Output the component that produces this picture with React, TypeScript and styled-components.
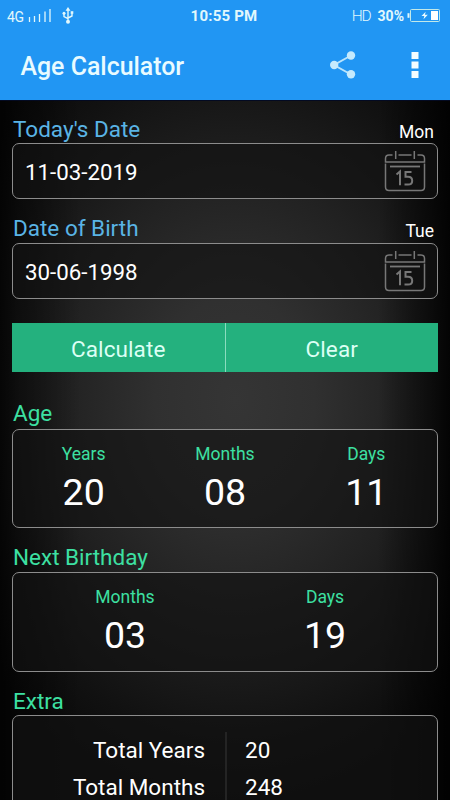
import React from "react";
import styled, { createGlobalStyle } from "styled-components";

const GlobalStyle = createGlobalStyle`
  * { box-sizing: border-box; }
  body { margin: 0; background: #000; overflow: hidden; }
`;

const Screen = styled.div`
  width: 450px;
  height: 800px;
  overflow: hidden;
  display: flex;
  flex-direction: column;
  font-family: Roboto, sans-serif;
  color: #fff;
`;

const TopBar = styled.header`
  height: 100px;
  flex: none;
  background: #2196f3;
`;

const StatusBar = styled.div`
  height: 32px;
  display: grid;
  grid-template-columns: 1fr auto 1fr;
  align-items: center;
  padding: 0 10px 0 7px;
  color: #e2f8fc;
`;

const StatusGroup = styled.div<{ $end?: boolean }>`
  display: flex;
  align-items: center;
  justify-content: ${(p) => (p.$end ? "flex-end" : "flex-start")};
`;

const Network = styled.span`
  font-size: 14px;
  line-height: 16px;
  letter-spacing: -0.4px;
  margin: 2px 4px 0 0;
`;

const Clock = styled.span`
  font-size: 15px;
  line-height: 18px;
  font-weight: 700;
  letter-spacing: 0.2px;
  margin-left: 1px;
`;

const Hd = styled.span`
  font-size: 15.5px;
  line-height: 18px;
  font-weight: 300;
  margin: -1px 7px 0 0;
  letter-spacing: -1.2px;
`;

const Percent = styled.span`
  font-size: 14px;
  line-height: 18px;
  font-weight: 700;
  margin-right: 3px;
`;

const AppBar = styled.div`
  height: 67px;
  display: flex;
  align-items: center;
  padding: 0 31px 0 20.5px;
`;

const Title = styled.h1`
  margin: 2px 0 0;
  flex: 1;
  font-size: 24.9px;
  line-height: 30px;
  font-weight: 500;
  color: #e9fbff;
`;

const IconButton = styled.button<{ $gap?: number }>`
  display: flex;
  border: 0;
  padding: 0;
  background: none;
  margin-right: ${(p) => p.$gap ?? 0}px;
`;

const Content = styled.main`
  height: 700px;
  padding: 0 12px;
  box-shadow: inset 0 1px #030a22;
  background:
    linear-gradient(90deg, rgba(0, 0, 0, 0.75), rgba(0, 0, 0, 0.45) 4%, transparent 18%, transparent 84%, rgba(0, 0, 0, 0.6) 96%, rgba(0, 0, 0, 0.85)),
    radial-gradient(ellipse 320px 410px at 235px 300px, #353535 0%, #303030 25%, #212121 55%, #111 84%, #0a0a0a 100%);
`;

const Heading = styled.div<{ $height: number; $lift: number; $tone: "blue" | "green" }>`
  height: ${(p) => p.$height}px;
  display: flex;
  align-items: flex-end;
  justify-content: space-between;
  padding: 0 4px ${(p) => p.$lift}px 1px;
  font-size: 22.5px;
  line-height: 26px;
  color: ${(p) => (p.$tone === "blue" ? "#5ab4e5" : "#3de0a2")};
`;

const Weekday = styled.span`
  font-size: 17.5px;
  line-height: 20px;
  color: #fff;
`;

const Panel = styled.div<{ $height: number }>`
  height: ${(p) => p.$height}px;
  display: flex;
  border: 1px solid #8c8c8c;
  border-radius: 7px;
  background: rgba(18, 18, 18, 0.65);
`;

const DateField = styled(Panel)`
  align-items: center;
  justify-content: space-between;
  padding: 0 11px 0 12px;
  font-size: 22.3px;
  line-height: 28px;
`;

const DateValue = styled.span`
  padding-top: 2px;
`;

const Actions = styled.div`
  height: 49px;
  margin-top: 24px;
  display: flex;
`;

const Action = styled.button`
  flex: 1;
  border: 0;
  padding: 2px 0 0;
  background: #24b17e;
  color: #dcfff4;
  font: 400 22.5px/28px Roboto, sans-serif;
  letter-spacing: 0.1px;
  & + & { border-left: 1px solid #8bdcbe; }
`;

const Stats = styled(Panel)<{ $inset: number }>`
  padding: 12px ${(p) => p.$inset}px 0;
`;

const Stat = styled.div`
  flex: 1;
  text-align: center;
`;

const StatLabel = styled.div`
  font-size: 17.5px;
  line-height: 24px;
  color: #3de0a2;
`;

const StatValue = styled.div`
  font-size: 37.5px;
  line-height: 44px;
  margin-top: 4px;
`;

const Totals = styled(Panel)`
  padding-top: 16px;
`;

const TotalsColumn = styled.div<{ $labels?: boolean }>`
  flex: 1;
  font-size: 22.5px;
  line-height: 37px;
  text-align: ${(p) => (p.$labels ? "right" : "left")};
  padding: ${(p) => (p.$labels ? "0 20px 0 0" : "0 0 0 18px")};
  border-left: ${(p) => (p.$labels ? "0" : "2px solid #242424")};
`;

const SignalIcon = () => (
  <svg width="24" height="14" viewBox="0 0 24 14" stroke="#e2f8fc" strokeWidth="1.3">
    <path d="M1.5 8v5M6.5 7v6M11.5 5v8M17 2.5V13M22 0v13" />
  </svg>
);

const UsbIcon = () => (
  <svg width="12" height="17" viewBox="0 0 12 17" fill="none" stroke="#e2f8fc" strokeWidth="1.4">
    <path d="M6 3v12M2 6v3.5l4 2.2M10 5v4L6 11" />
    <path d="M6 0 3.5 3.7h5z" fill="#e2f8fc" stroke="none" />
    <circle cx="6" cy="14.7" r="2" fill="#e2f8fc" stroke="none" />
    <circle cx="2" cy="6.3" r="1.5" fill="#e2f8fc" stroke="none" />
    <path d="M8.7 4.2h2.6v2.6H8.7z" fill="#e2f8fc" stroke="none" />
  </svg>
);

const UsbSlot = styled.span`
  display: flex;
  margin: -2px 0 0 10px;
`;

const BatteryIcon = () => (
  <svg width="33" height="13" viewBox="0 0 33 13">
    <path d="M1.5 4.2v4.6" stroke="#e2f8fc" strokeWidth="2" />
    <rect x="3.5" y=".5" width="29" height="12" rx="1" fill="none" stroke="#c2e9e9" />
    <rect x="24" y="2" width="7" height="9" fill="#fff" />
    <path d="M18.7 2.7 14.5 7h2.8l-.8 3.3 4.3-4.5h-2.9z" fill="#e9fbff" />
  </svg>
);

const BatterySlot = styled.span`
  display: flex;
  margin-top: -2px;
`;

const ShareIcon = () => (
  <svg width="26" height="28" viewBox="0 0 26 28">
    <path d="M21 4.5 4 14l17 9.5" fill="none" stroke="#b9e4fc" strokeWidth="2" />
    <g fill="#c5eafd">
      <circle cx="21" cy="4.5" r="4.2" />
      <circle cx="4.2" cy="14" r="4.2" />
      <circle cx="21" cy="23.2" r="4.2" />
    </g>
  </svg>
);

const ShareSlot = styled.span`
  display: flex;
  margin-top: -2px;
`;

const MoreIcon = () => (
  <svg width="8" height="27" viewBox="0 0 8 27" fill="#f5fdff">
    <path d="M.5 0h7v7h-7zM.5 9.5h7v7h-7zM.5 19h7v7h-7z" />
  </svg>
);

const CalendarIcon = () => (
  <svg width="42" height="42" viewBox="0 0 42 42" fill="none" stroke="#777" strokeWidth="1.5">
    <path d="M8.5 5H5Q1.5 5 1.5 8.500V12h39V8.500Q40.500 5 37 5h-3.500M14.500 5h13" />
    <path d="M11.700 1v8M30.300 1v8" />
    <path d="M1.500 13.500V37q0 3.500 3.500 3.500h32q3.500 0 3.500-3.500V13.500" />
    <path d="M6 16.500h30" strokeWidth="1.800" />
    <path d="m12.500 24.500 3.500-3v13.700M27.500 22h-6v4.800h2.500q4.200 0 4.200 3.900 0 3.900-4.200 3.900H20.500" strokeWidth="2" />
  </svg>
);

const DateInput = ({ label, weekday, value, height, lift }: { label: string; weekday: string; value: string; height: number; lift: number }) => (
  <>
    <Heading $height={height} $lift={lift} $tone="blue">
      {label}
      <Weekday>{weekday}</Weekday>
    </Heading>
    <DateField $height={56}>
      <DateValue>{value}</DateValue>
      <CalendarIcon />
    </DateField>
  </>
);

const StatPanel = ({ height, inset, items }: { height: number; inset: number; items: [string, string][] }) => (
  <Stats $height={height} $inset={inset}>
    {items.map(([label, value]) => (
      <Stat key={label}>
        <StatLabel>{label}</StatLabel>
        <StatValue>{value}</StatValue>
      </Stat>
    ))}
  </Stats>
);

export default function App() {
  return (
    <Screen>
      <GlobalStyle />
      <TopBar>
        <StatusBar>
          <StatusGroup>
            <Network>4G</Network>
            <SignalIcon />
            <UsbSlot>
              <UsbIcon />
            </UsbSlot>
          </StatusGroup>
          <Clock>10:55 PM</Clock>
          <StatusGroup $end>
            <Hd>HD</Hd>
            <Percent>30%</Percent>
            <BatterySlot>
              <BatteryIcon />
            </BatterySlot>
          </StatusGroup>
        </StatusBar>
        <AppBar>
          <Title>Age Calculator</Title>
          <IconButton $gap={55} aria-label="Share">
            <ShareSlot>
              <ShareIcon />
            </ShareSlot>
          </IconButton>
          <IconButton aria-label="More options">
            <MoreIcon />
          </IconButton>
        </AppBar>
      </TopBar>
      <Content>
        <DateInput label="Today's Date" weekday="Mon" value="11-03-2019" height={43} lift={1} />
        <DateInput label="Date of Birth" weekday="Tue" value="30-06-1998" height={44} lift={2} />
        <Actions>
          <Action>Calculate</Action>
          <Action>Clear</Action>
        </Actions>
        <Heading $height={57} $lift={3} $tone="green">Age</Heading>
        <StatPanel height={99} inset={0} items={[["Years", "20"], ["Months", "08"], ["Days", "11"]]} />
        <Heading $height={44} $lift={2} $tone="green">Next Birthday</Heading>
        <StatPanel height={100} inset={12} items={[["Months", "03"], ["Days", "19"]]} />
        <Heading $height={43} $lift={1} $tone="green">Extra</Heading>
        <Totals $height={200}>
          <TotalsColumn $labels>
            <div>Total Years</div>
            <div>Total Months</div>
          </TotalsColumn>
          <TotalsColumn>
            <div>20</div>
            <div>248</div>
          </TotalsColumn>
        </Totals>
      </Content>
    </Screen>
  );
}
